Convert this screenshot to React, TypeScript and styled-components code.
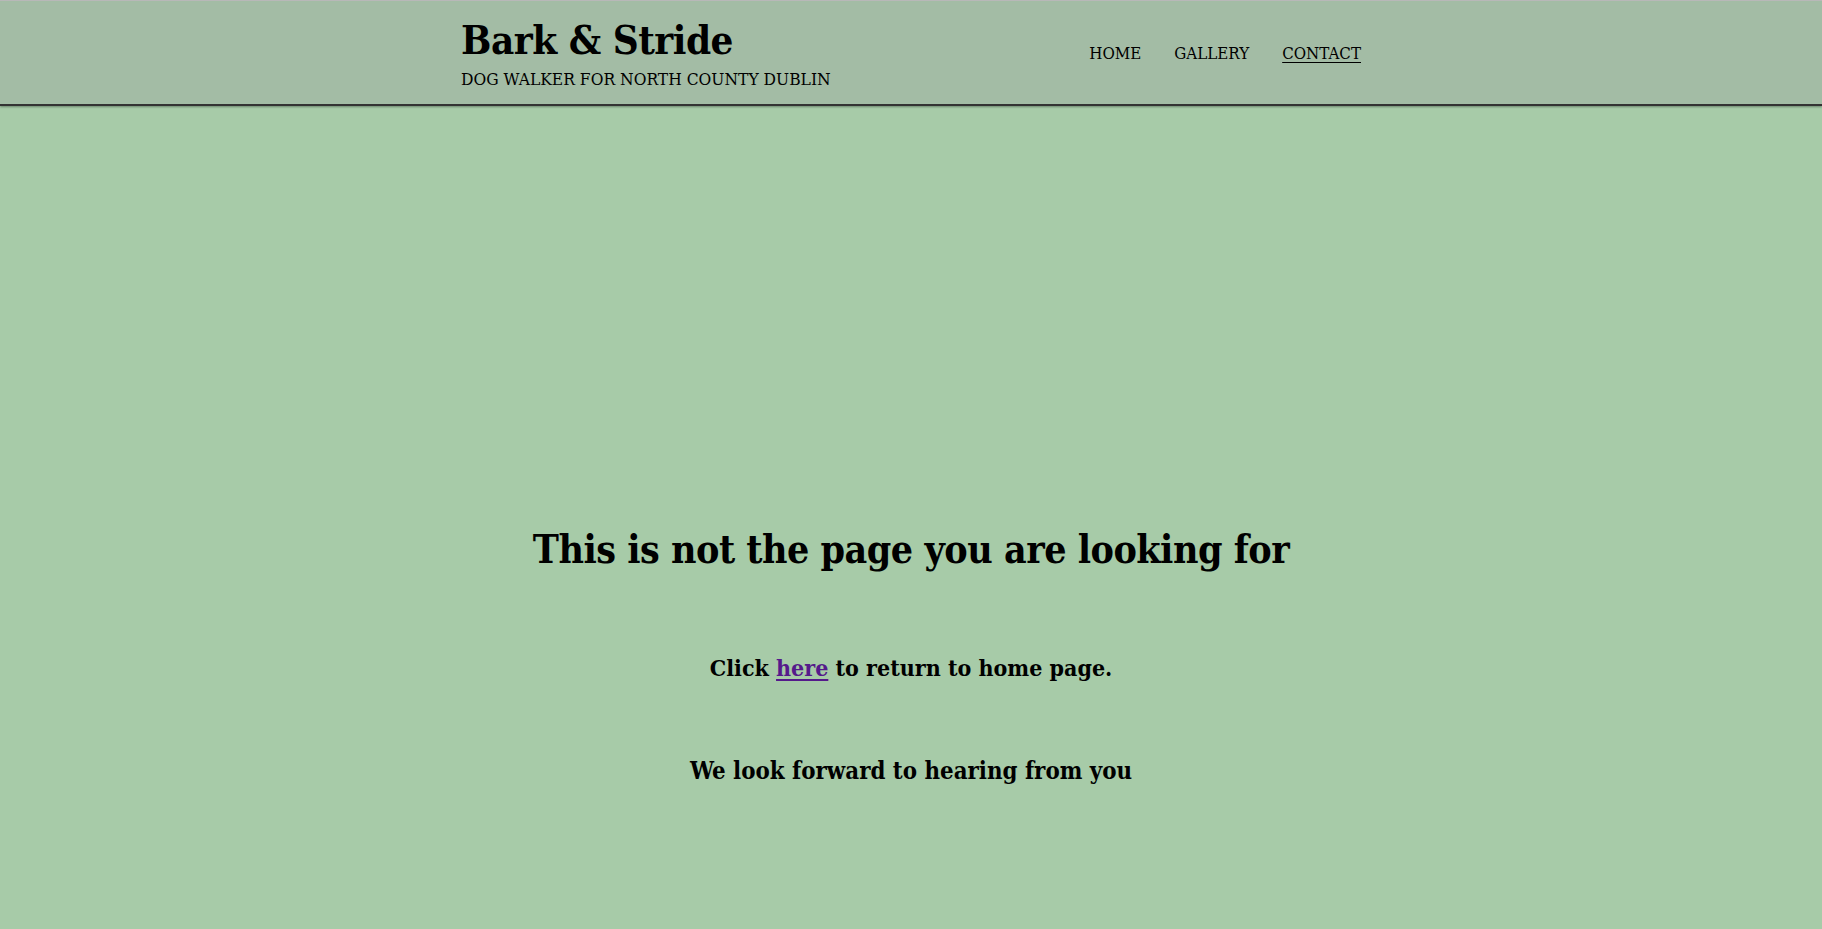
import styled, { createGlobalStyle } from "styled-components";

const GlobalStyle = createGlobalStyle`
  html, body {
    margin: 0;
    padding: 0;
    background: #a7cba8;
    font-family: "DejaVu Serif", "Liberation Serif", serif;
    color: #000;
  }
`;

const Header = styled.header`
  background: #a3bca5;
  border-top: 1px solid #b8b8b8;
  border-bottom: 2px solid #333;
  box-shadow: 0 1px 2px rgba(0, 0, 0, 0.35);
  height: 103px;
  box-sizing: content-box;
`;

const HeaderInner = styled.div`
  width: 900px;
  height: 100%;
  margin: 0 auto;
  display: flex;
  justify-content: space-between;
  align-items: center;
`;

const Brand = styled.div`
  display: flex;
  flex-direction: column;
  padding-top: 2px;
`;

const Title = styled.h1`
  margin: 0;
  font-size: 40px;
  line-height: 1.1;
  font-weight: 700;
  font-stretch: condensed;
  letter-spacing: -0.5px;
`;

const Tagline = styled.p`
  margin: 7px 0 0;
  font-size: 17.3px;
  font-stretch: condensed;
  text-transform: uppercase;
`;

const Nav = styled.nav`
  display: flex;
  gap: 33px;
  padding-top: 1px;
`;

const NavLink = styled.a<{ $active?: boolean }>`
  color: #000;
  font-size: 16.8px;
  font-stretch: condensed;
  text-decoration: ${(p) => (p.$active ? "underline" : "none")};
  text-underline-offset: 3px;
`;

const Main = styled.main`
  display: flex;
  flex-direction: column;
  align-items: center;
  padding-top: 420px;
  text-align: center;
`;

const Heading = styled.h2`
  margin: 0;
  font-size: 39px;
  font-weight: 700;
  font-stretch: condensed;
  letter-spacing: -0.5px;
  line-height: 1.2;
`;

const Message = styled.p<{ $gap: number; $size: number }>`
  margin: 0;
  font-size: ${(p) => p.$size}px;
  font-weight: 700;
  font-stretch: condensed;
  line-height: 1.3;
  margin-top: ${(p) => p.$gap}px;
`;

const HomeLink = styled.a`
  color: #551a8b;
  text-decoration: underline;
  text-underline-offset: 3px;
`;

export default function App() {
  return (
    <>
      <GlobalStyle />
      <Header>
        <HeaderInner>
          <Brand>
            <Title>Bark &amp; Stride</Title>
            <Tagline>Dog Walker for North County Dublin</Tagline>
          </Brand>
          <Nav>
            <NavLink href="#">HOME</NavLink>
            <NavLink href="#">GALLERY</NavLink>
            <NavLink href="#" $active>
              CONTACT
            </NavLink>
          </Nav>
        </HeaderInner>
      </Header>
      <Main>
        <Heading>This is not the page you are looking for</Heading>
        <Message $gap={80} $size={23}>
          Click <HomeLink href="#">here</HomeLink> to return to home page.
        </Message>
        <Message $gap={73} $size={23.8}>
          We look forward to hearing from you
        </Message>
      </Main>
    </>
  );
}
